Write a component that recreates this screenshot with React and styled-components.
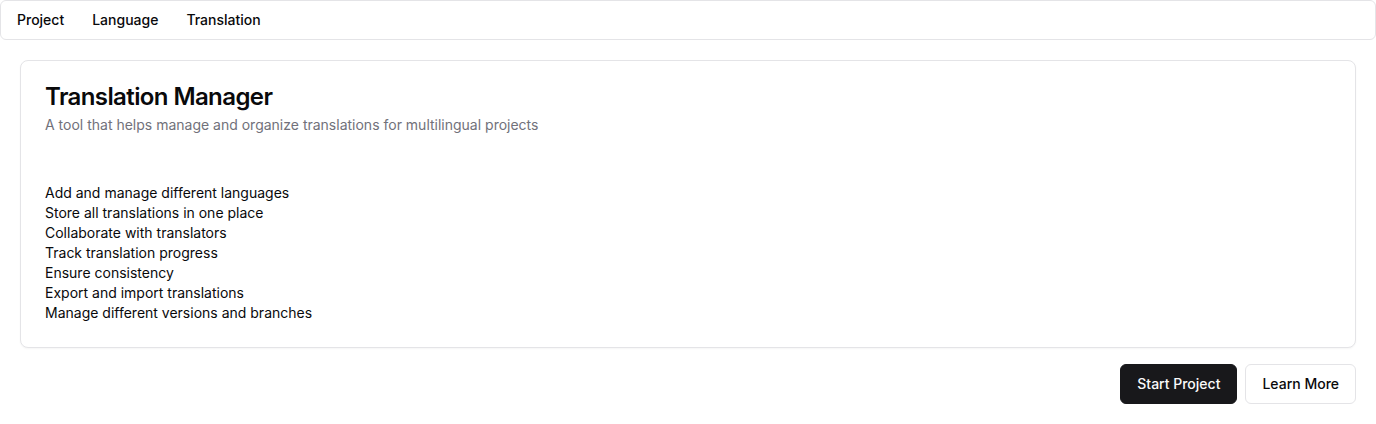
import React from "react";
import styled, { createGlobalStyle } from "styled-components";

const Global = createGlobalStyle`
  * { box-sizing: border-box; }
  body {
    margin: 0;
    background: #ffffff;
    font-family: Inter, "Noto Sans", sans-serif;
    color: #09090b;
  }
`;

const Menubar = styled.nav`
  display: flex;
  align-items: center;
  gap: 4px;
  height: 40px;
  padding: 4px;
  border: 1px solid #e4e4e7;
  border-radius: 6px;
  background: #ffffff;
`;

const MenuItem = styled.button`
  display: flex;
  align-items: center;
  padding: 6px 12px;
  border: none;
  background: transparent;
  border-radius: 3px;
  font-family: inherit;
  font-size: 14px;
  line-height: 20px;
  font-weight: 500;
  color: #09090b;
  cursor: default;
`;

const Main = styled.main`
  padding: 20px;
  display: flex;
  flex-direction: column;
  gap: 16px;
`;

const Card = styled.section`
  border: 1px solid #e4e4e7;
  border-radius: 8px;
  background: #ffffff;
  box-shadow: 0 1px 2px rgba(0, 0, 0, 0.04);
`;

const CardHeader = styled.header`
  display: flex;
  flex-direction: column;
  gap: 6px;
  padding: 24px;
`;

const Title = styled.h2`
  margin: 0;
  font-size: 24px;
  line-height: 24px;
  font-weight: 600;
  letter-spacing: -0.6px;
`;

const Description = styled.p`
  margin: 0;
  font-size: 14px;
  line-height: 20px;
  color: #71717a;
`;

const CardContent = styled.div`
  padding: 24px;
`;

const FeatureList = styled.ul`
  margin: 0;
  padding: 0;
  list-style: none;
`;

const Feature = styled.li`
  font-size: 14px;
  line-height: 20px;
  color: #09090b;
`;

const Actions = styled.div`
  display: flex;
  justify-content: flex-end;
  gap: 8px;
`;

const Button = styled.button`
  height: 40px;
  padding: 8px 16px;
  border-radius: 6px;
  font-family: inherit;
  font-size: 14px;
  line-height: 20px;
  font-weight: 500;
  cursor: pointer;
  border: 1px solid ${(p) => (p.$primary ? "#18181b" : "#e4e4e7")};
  background: ${(p) => (p.$primary ? "#18181b" : "#ffffff")};
  color: ${(p) => (p.$primary ? "#fafafa" : "#09090b")};
`;

const features = [
  "Add and manage different languages",
  "Store all translations in one place",
  "Collaborate with translators",
  "Track translation progress",
  "Ensure consistency",
  "Export and import translations",
  "Manage different versions and branches",
];

export default function App() {
  return (
    <>
      <Global />
      <Menubar>
        <MenuItem>Project</MenuItem>
        <MenuItem>Language</MenuItem>
        <MenuItem>Translation</MenuItem>
      </Menubar>
      <Main>
        <Card>
          <CardHeader>
            <Title>Translation Manager</Title>
            <Description>
              A tool that helps manage and organize translations for multilingual projects
            </Description>
          </CardHeader>
          <CardContent>
            <FeatureList>
              {features.map((f) => (
                <Feature key={f}>{f}</Feature>
              ))}
            </FeatureList>
          </CardContent>
        </Card>
        <Actions>
          <Button $primary>Start Project</Button>
          <Button>Learn More</Button>
        </Actions>
      </Main>
    </>
  );
}
